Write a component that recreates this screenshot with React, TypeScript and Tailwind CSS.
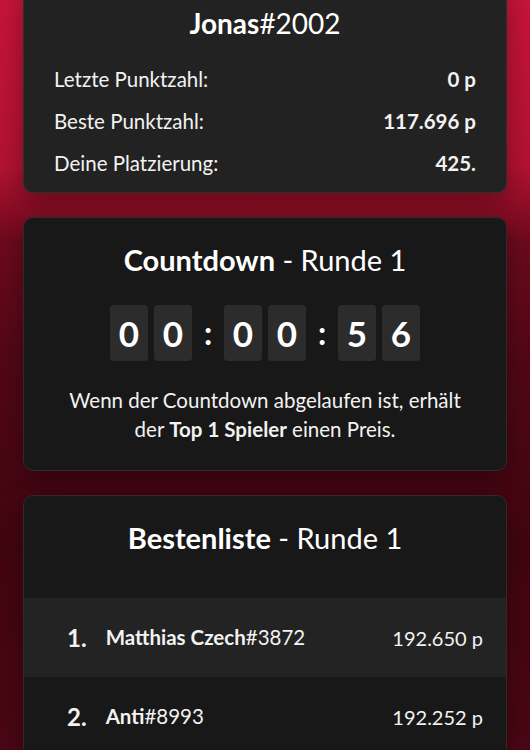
import React from 'react'

const font = { fontFamily: 'Lato, "Noto Sans", sans-serif' }

const stats = [
  { label: 'Letzte Punktzahl:', value: '0 p' },
  { label: 'Beste Punktzahl:', value: '117.696 p' },
  { label: 'Deine Platzierung:', value: '425.' },
]

const leaders = [
  { rank: 1, name: 'Matthias Czech', tag: '#3872', score: '192.650 p' },
  { rank: 2, name: 'Anti', tag: '#8993', score: '192.252 p' },
]

function Digit({ d }: { d: string }) {
  return (
    <div className="w-[38px] h-[56px] rounded-[4px] bg-[#2c2c2c] flex items-center justify-center text-[35px] font-bold text-white">
      {d}
    </div>
  )
}

function Colon() {
  return <div className="w-[32px] flex items-center justify-center text-[32px] font-bold text-white">:</div>
}

export default function App() {
  return (
    <div
      className="min-h-screen w-full px-[23px] flex flex-col gap-6 bg-[linear-gradient(180deg,#c8143a_0%,#b51232_22%,#6c0a1c_32%,#520716_48%,#420510_72%,#4c0614_100%)] text-[#f2f2f2]"
      style={font}
    >
      {/* Profil */}
      <div className="-mt-[20px] pt-6 pb-[8px] px-[30px] rounded-[10px] bg-[#222222] border border-[#2f2f2f] shadow-[0_10px_28px_rgba(0,0,0,0.35)]">
        <h1 className="text-center text-[28px] leading-[36px] text-white">
          <span className="font-bold">Jonas</span>#2002
        </h1>
        <div className="mt-[17px]">
          {stats.map((s) => (
            <div key={s.label} className="h-[42px] flex items-center justify-between text-[20.5px]">
              <span>{s.label}</span>
              <span className="font-bold">{s.value}</span>
            </div>
          ))}
        </div>
      </div>

      {/* Countdown */}
      <div className="pt-[23px] pb-[26px] px-[30px] rounded-[10px] bg-[#181818] border border-[#2c2c2c] shadow-[0_10px_28px_rgba(0,0,0,0.35)]">
        <h2 className="text-center text-[29px] leading-[38px] text-white">
          <span className="font-bold">Countdown</span> - Runde 1
        </h2>
        <div className="mt-[26px] flex justify-center">
          <div className="flex gap-[6px]"><Digit d="0" /><Digit d="0" /></div>
          <Colon />
          <div className="flex gap-[6px]"><Digit d="0" /><Digit d="0" /></div>
          <Colon />
          <div className="flex gap-[6px]"><Digit d="5" /><Digit d="6" /></div>
        </div>
        <p className="mt-[25px] text-center text-[20.5px] leading-[29px]">
          Wenn der Countdown abgelaufen ist, erhält der <b className="font-bold">Top 1 Spieler</b> einen Preis.
        </p>
      </div>

      {/* Bestenliste */}
      <div className="pt-[23px] rounded-[10px] bg-[#181818] border border-[#2c2c2c] shadow-[0_10px_28px_rgba(0,0,0,0.35)] overflow-hidden">
        <h2 className="text-center text-[29px] leading-[38px] text-white">
          <span className="font-bold">Bestenliste</span> - Runde 1
        </h2>
        <div className="mt-[41px]">
          {leaders.map((l, i) => (
            <div
              key={l.rank}
              className={`h-[79px] pl-[43px] pr-[23px] flex items-center justify-between ${i % 2 === 0 ? 'bg-[#232323]' : 'bg-[#181818]'}`}
            >
              <div className="flex items-center gap-[19px]">
                <span className="text-[24px] font-bold">{l.rank}.</span>
                <span className="text-[20.5px]">
                  <span className="font-bold">{l.name}</span>{l.tag}
                </span>
              </div>
              <span className="text-[20px]">{l.score}</span>
            </div>
          ))}
        </div>
      </div>
    </div>
  )
}
